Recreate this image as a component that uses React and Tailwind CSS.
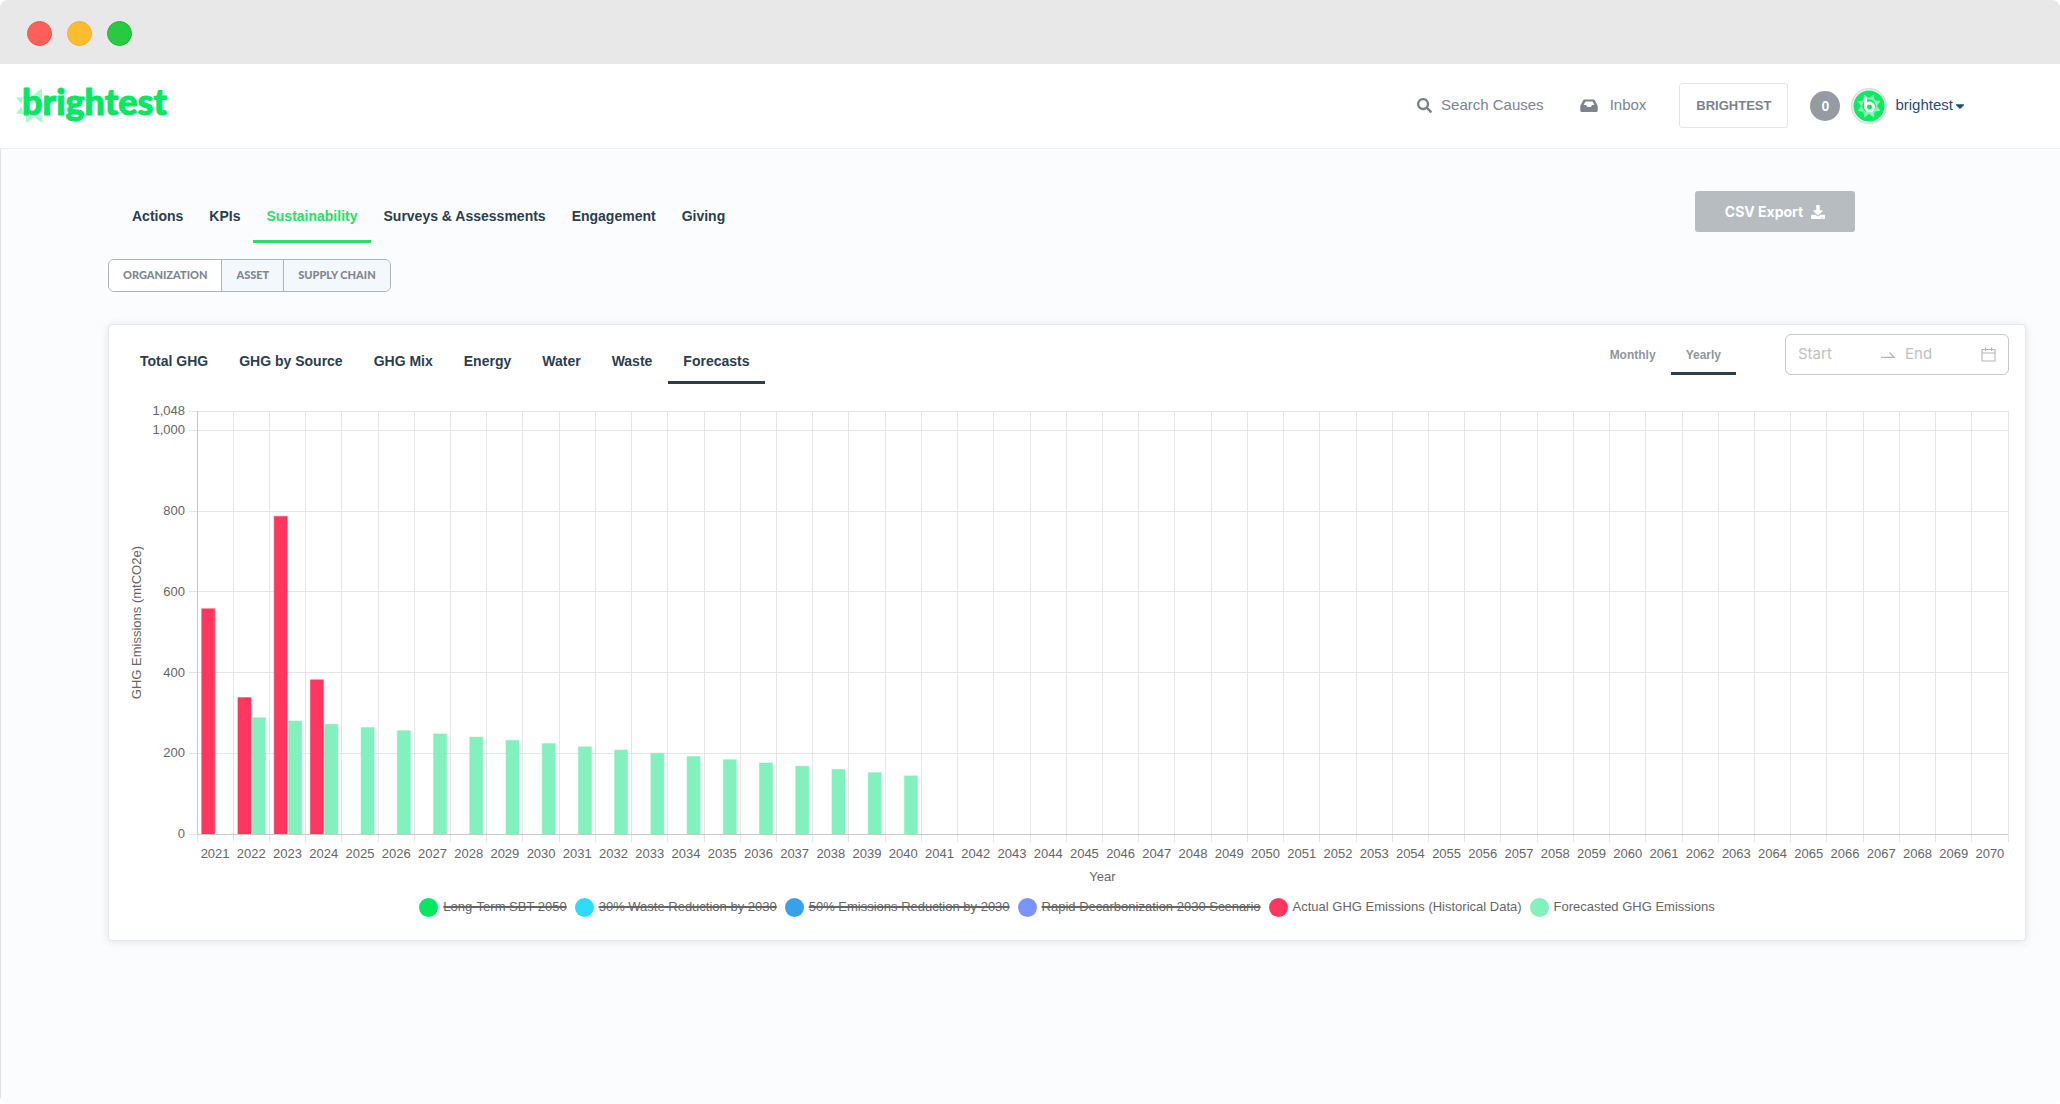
import React, { useState } from "react";
import { FaSearch, FaDownload, FaCaretDown } from "react-icons/fa";

const mainTabs = [
  "Actions",
  "KPIs",
  "Sustainability",
  "Surveys & Assessments",
  "Engagement",
  "Giving",
];
const scopes = ["Organization", "Asset", "Supply Chain"];
const chartTabs = [
  "Total GHG",
  "GHG by Source",
  "GHG Mix",
  "Energy",
  "Water",
  "Waste",
  "Forecasts",
];

const years = Array.from({ length: 50 }, (_, i) => 2021 + i);
const actual = { 2021: 558, 2022: 338, 2023: 787, 2024: 382 };
// linear forecast from 2022 to 2040
const forecast = {};
for (let i = 0; i < 19; i++) forecast[2022 + i] = 288 - i * 8;

const ticks = [0, 200, 400, 600, 800, 1000, 1048];
const MAX = 1048;
const PLOT_H = 423;

const legend = [
  { label: "Long-Term SBT 2050", color: "bg-[#06e763]", hidden: true },
  { label: "30% Waste Reduction by 2030", color: "bg-[#2bdcff]", hidden: true },
  { label: "50% Emissions Reduction by 2030", color: "bg-[#36a2eb]", hidden: true },
  { label: "Rapid Decarbonization 2030 Scenario", color: "bg-[#7a93ff]", hidden: true },
  { label: "Actual GHG Emissions (Historical Data)", color: "bg-[#ff365f]" },
  { label: "Forecasted GHG Emissions", color: "bg-[#82f1bd]" },
];

const yOf = (v) => PLOT_H - (v / MAX) * PLOT_H;

function TitleBar() {
  return (
    <div className="flex h-16 items-center gap-[15px] bg-[#e8e8e8] pl-[27px] pt-[3px]">
      <span className="size-[25px] rounded-full border border-[#ee544d] bg-[#ff5f58]" />
      <span className="size-[25px] rounded-full border border-[#eeae3c] bg-[#ffbd2e]" />
      <span className="size-[25px] rounded-full border border-[#21b438] bg-[#28ca41]" />
    </div>
  );
}

function Logo() {
  return (
    <a href="#" aria-label="brightest">
      <svg width="170" height="60" viewBox="14 76 170 60">
        <g fill="#a4fcca">
          <path d="M42 88 L34 94.5 L42 98 Z" />
          <path d="M16 97.5 L23 97 L21.5 104 Z" />
          <path d="M16 113.5 L21.5 106.5 L24 114 Z" />
          <path d="M26 115 L34 117.5 L26 123 Z" />
          <path d="M42 115 L34.5 117.5 L42.5 123 Z" />
        </g>
        <text
          x="22"
          y="115"
          fill="#06e763"
          stroke="#06e763"
          strokeWidth="1"
          className="font-['Lato',sans-serif] text-[36px] font-black"
        >
          brightest
        </text>
      </svg>
    </a>
  );
}

function InboxIcon() {
  return (
    <svg width="18" height="14" viewBox="0 0 18 14" fill="currentColor" fillRule="evenodd">
      <path d="M4.6 0.5 H13.4 Q14.4 0.5 14.9 1.4 L17.4 6.2 Q17.7 6.8 17.7 7.4 V11.4 Q17.7 13 16.1 13 H1.9 Q0.3 13 0.3 11.4 V7.4 Q0.3 6.8 0.6 6.2 L3.1 1.4 Q3.6 0.5 4.6 0.5 Z M5.4 2.5 L3.6 6 H6 L7.2 8 H10.8 L12 6 H14.4 L12.6 2.5 Z" />
    </svg>
  );
}

function Avatar() {
  return (
    <svg width="38" height="38" viewBox="0 0 38 38">
      <circle cx="19" cy="19" r="18" fill="#dcdcdc" />
      <circle cx="19" cy="19" r="16.5" fill="#f5f5f5" />
      <circle cx="19" cy="19" r="15.5" fill="#0bea61" />
      <g fill="#8df5b5">
        {[22, 67, 112, 157, 202, 247, 292, 337].map((a) => (
          <path
            key={a}
            d="M19 6.5 L22.5 12.5 L15.5 12.5 Z"
            transform={`rotate(${a} 19 19)`}
          />
        ))}
      </g>
      <circle cx="19.5" cy="20" r="4" fill="#0bea61" stroke="#fff" strokeWidth="3" />
      <path d="M14 9.5 L17 11 V20 H14 Z" fill="#fff" />
    </svg>
  );
}

function Header() {
  return (
    <header className="flex h-[85px] items-center justify-between border-b border-[#eeeff0] bg-white pb-px pl-[14px] pr-[93px] text-[15px] text-[#7d838d]">
      <Logo />
      <nav className="flex items-center">
        <a href="#" className="flex items-center gap-[9px]">
          <FaSearch className="size-[15px]" />
          Search Causes
        </a>
        <a href="#" className="ml-9 flex items-center gap-3">
          <InboxIcon />
          Inbox
        </a>
        <button className="ml-[33px] h-[45px] rounded-[3px] border border-[#e3e4e7] px-4 text-[13px] font-bold">
          BRIGHTEST
        </button>
        <span className="ml-[22px] flex size-[30px] items-center justify-center rounded-full bg-[#969aa3] text-sm font-bold text-white">
          0
        </span>
        <button className="ml-2.5 flex items-center text-[#1f4e79]">
          <Avatar />
          <span className="ml-[7px]">brightest</span>
          <FaCaretDown className="size-[14px]" />
        </button>
      </nav>
    </header>
  );
}

function EmissionsChart() {
  return (
    <div className="mt-[27px] flex pl-5 pr-[17px]">
      <div className="flex h-[423px] w-4 items-center justify-center">
        <span className="rotate-180 whitespace-nowrap text-[13px] leading-4 text-[#666] [writing-mode:vertical-rl]">
          GHG Emissions (mtCO2e)
        </span>
      </div>
      <div className="ml-[52px] h-[476px] min-w-0 flex-1">
        <svg className="h-full w-full overflow-visible text-[13px]" fill="#666">
          <g stroke="#e5e5e5" shapeRendering="crispEdges">
            {ticks.map((t) => (
              <line key={t} x1="-8" x2="100%" y1={yOf(t)} y2={yOf(t)} />
            ))}
            {[...years, 2071].map((y, i) => (
              <line key={y} x1={`${i * 2}%`} x2={`${i * 2}%`} y1="0" y2={PLOT_H + 8} />
            ))}
            <line x1="0" x2="0" y1="0" y2={PLOT_H} stroke="#c9c9c9" />
          </g>
          {years.map((y, i) => (
            <g key={y}>
              {actual[y] && (
                <rect
                  x={`${i * 2 + 0.26}%`}
                  width="0.72%"
                  y={yOf(actual[y])}
                  height={PLOT_H - yOf(actual[y])}
                  fill="#ff365f"
                  stroke="#ff365f"
                  strokeOpacity="0.5"
                />
              )}
              {forecast[y] && (
                <rect
                  x={`${i * 2 + 1.06}%`}
                  width="0.72%"
                  y={yOf(forecast[y])}
                  height={PLOT_H - yOf(forecast[y])}
                  fill="#82f1bd"
                  stroke="#82f1bd"
                  strokeOpacity="0.5"
                />
              )}
              <text x={`${i * 2 + 1}%`} y="447" textAnchor="middle">
                {y}
              </text>
            </g>
          ))}
          <line
            x1="0"
            x2="100%"
            y1={PLOT_H}
            y2={PLOT_H}
            stroke="#c9c9c9"
            shapeRendering="crispEdges"
          />
          {ticks.map((t) => (
            <text key={t} x="-12" y={yOf(t) + 4} textAnchor="end">
              {t.toLocaleString("en-US")}
            </text>
          ))}
          <text x="50%" y="470" textAnchor="middle">
            Year
          </text>
        </svg>
      </div>
    </div>
  );
}

function DateRange() {
  return (
    <div className="flex h-[41px] w-56 items-center rounded-md border border-[#c4c6c8] px-3 font-['Inter',sans-serif] text-[15px]">
      <input
        aria-label="Start date"
        placeholder="Start"
        className="w-[83px] outline-none placeholder:text-[#bfbfbf]"
      />
      <svg width="14" height="8" viewBox="0 0 14 8" fill="none" stroke="#b5b5b5" strokeWidth="1.2">
        <path d="M0 6.4 H13 L8.5 1.5" />
      </svg>
      <input
        aria-label="End date"
        placeholder="End"
        className="ml-2.5 w-0 flex-1 outline-none placeholder:text-[#bfbfbf]"
      />
      <svg width="15" height="15" viewBox="0 0 15 15" fill="none" stroke="#b5b5b5" strokeWidth="1.1">
        <path d="M1 2.5 H14 V14 H1 Z M1 6 H14 M4.5 0.5 V4 M10.5 0.5 V4" />
      </svg>
    </div>
  );
}

export default function App() {
  const [tab, setTab] = useState("Sustainability");
  const [scope, setScope] = useState("Organization");
  const [chartTab, setChartTab] = useState("Forecasts");
  const [period, setPeriod] = useState("Yearly");

  return (
    <div className="flex min-h-screen flex-col overflow-hidden rounded-lg bg-[#fbfcfe] font-['Liberation_Sans',Arial,sans-serif]">
      <TitleBar />
      <Header />
      <main className="flex-1 border-l border-[#dfe1e6] pl-[107px] pr-[34px] pt-10">
        <div className="flex items-start justify-between pl-[11px] pr-[171px]">
          <div className="flex">
            {mainTabs.map((t) => (
              <button
                key={t}
                onClick={() => setTab(t)}
                className={`h-[54px] border-b-[3px] px-[13px] pt-[3px] text-sm font-bold ${
                  tab === t
                    ? "border-[#26e165] text-[#26e165]"
                    : "border-transparent text-[#2c3e4c]"
                }`}
              >
                {t}
              </button>
            ))}
          </div>
          <button className="mt-0.5 flex h-[41px] w-40 items-center justify-center gap-2 rounded-[3px] bg-[#b6bcc0] font-['Inter',sans-serif] text-sm font-bold text-white">
            CSV Export
            <FaDownload className="size-[14px]" />
          </button>
        </div>

        <div className="mt-4 inline-flex h-[33px] divide-x divide-[#aeb3b8] overflow-hidden rounded-md border border-[#aeb3b8]">
          {scopes.map((s) => (
            <button
              key={s}
              onClick={() => setScope(s)}
              className={`px-[14px] font-['Lato',sans-serif] text-[11px] font-black uppercase text-[#80868f] ${
                scope === s ? "bg-white" : "bg-[#f3f8fc]"
              }`}
            >
              {s}
            </button>
          ))}
        </div>

        <section className="mt-8 rounded border border-[#e6e7e8] bg-white pb-[23px] pt-[9px] shadow-[0_1px_8px_rgba(0,0,0,0.1)]">
          <div className="flex items-start justify-between px-4">
            <div className="mt-1 flex gap-px">
              {chartTabs.map((t) => (
                <button
                  key={t}
                  onClick={() => setChartTab(t)}
                  className={`h-[46px] border-b-[3px] px-[15px] pt-[3px] text-sm font-bold text-[#2c3e4c] ${
                    chartTab === t ? "border-[#2c3e4c]" : "border-transparent"
                  }`}
                >
                  {t}
                </button>
              ))}
            </div>
            <div className="flex">
              <div className="mr-[49px] flex">
                {["Monthly", "Yearly"].map((p) => (
                  <button
                    key={p}
                    onClick={() => setPeriod(p)}
                    className={`h-[41px] border-b-[3px] px-[15px] pt-[3px] text-xs font-bold text-[#90969c] ${
                      period === p ? "border-[#2c3e4c]" : "border-transparent"
                    }`}
                  >
                    {p}
                  </button>
                ))}
              </div>
              <DateRange />
            </div>
          </div>

          <EmissionsChart />

          <ul className="mt-2.5 flex flex-wrap justify-center gap-2 text-[13px] leading-5 text-[#666]">
            {legend.map((item) => (
              <li key={item.label} className="flex items-center gap-[5px]">
                <span className={`size-[19px] rounded-full ${item.color}`} />
                <span className={item.hidden ? "line-through decoration-2" : ""}>
                  {item.label}
                </span>
              </li>
            ))}
          </ul>
        </section>
      </main>
    </div>
  );
}
